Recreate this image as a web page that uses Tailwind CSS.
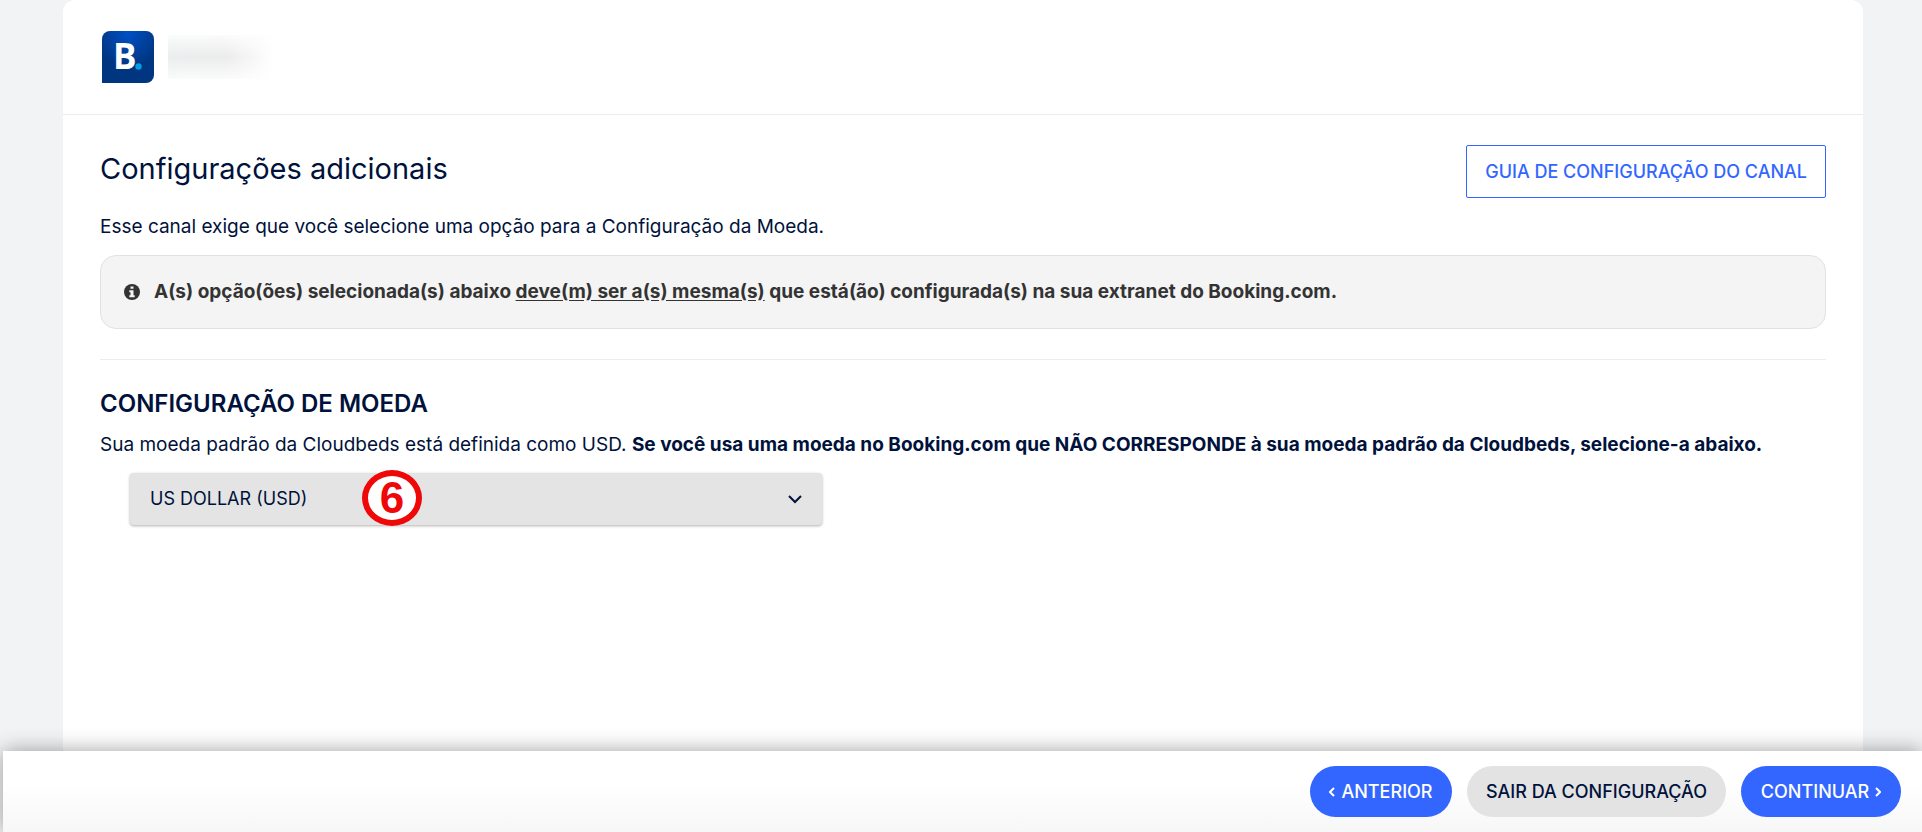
<!DOCTYPE html>
<html lang="pt-BR">
<head>
<meta charset="utf-8">
<meta name="viewport" content="width=device-width, initial-scale=1">
<title>Configurações adicionais</title>
<script src="https://cdn.jsdelivr.net/npm/@tailwindcss/browser@4"></script>
</head>
<body class="flex min-h-screen flex-col bg-[#f1f3f5] font-['Inter',sans-serif] text-[19px] text-[#00123c]">
  <main class="mr-[59px] ml-[63px] grow rounded-t-xl bg-white">
    <header class="flex items-center gap-3.5 border-b border-[#ececec] pt-[31px] pr-[37px] pb-[31px] pl-[39px]">
      <svg class="size-[52px] shrink-0" viewBox="0 0 52 52" role="img" aria-label="Booking.com">
        <defs>
          <radialGradient id="logo" cx="50%" cy="5%" r="65%">
            <stop offset="0" stop-color="#0050c4"/>
            <stop offset="1" stop-color="#003580"/>
          </radialGradient>
        </defs>
        <path d="M8 0H44a8 8 0 0 1 8 8V44a8 8 0 0 1-8 8H0V8a8 8 0 0 1 8-8Z" fill="url(#logo)"/>
        <text x="11" y="38" font-family="Open Sans, sans-serif" font-size="35" font-weight="700" fill="#fff">B</text>
        <circle cx="36.500" cy="35.500" r="3.200" fill="#009fe3"/>
      </svg>
      <div class="relative h-11 w-[106px] bg-linear-to-r from-[#e9eeed] via-[#ececed] via-55% to-white">
        <div class="absolute inset-0 bg-linear-to-b from-white/80 via-transparent to-white/80"></div>
      </div>
    </header>

    <div class="px-[37px] pt-[30px]">
      <div class="flex items-start justify-between">
        <h1 class="pt-1.5 text-[29px] leading-9">Configurações adicionais</h1>
        <a href="#guia" class="flex h-[53px] items-center rounded-xs border border-[#3366ff] px-[18px] text-lg font-medium text-[#3366ff]">GUIA DE CONFIGURAÇÃO DO CANAL</a>
      </div>
      <p class="mt-[15px] leading-7">Esse canal exige que você selecione uma opção para a Configuração da Moeda.</p>
      <div class="mt-3.5 flex h-[74px] items-center gap-3.5 rounded-2xl border border-[#e2e2e2] bg-[#f4f4f4] px-[23px] text-[#333333]">
        <svg class="size-4 shrink-0" viewBox="0 0 16 16" aria-hidden="true">
          <circle cx="8" cy="8" r="8" fill="#333"/>
          <path d="M6.500 2.500h3v2.300h-3zM5.300 6.200h4.200v5h1.200v2H5.300v-2h1.200v-3H5.300z" fill="#f4f4f4"/>
        </svg>
        <p class="font-bold">A(s) opção(ões) selecionada(s) abaixo <u class="underline-offset-2">deve(m) ser a(s) mesma(s)</u> que está(ão) configurada(s) na sua extranet do Booking.com.</p>
      </div>
      <hr class="mt-[30px] border-[#ececec]">
      <h2 class="mt-7 text-2xl leading-8 font-semibold">CONFIGURAÇÃO DE MOEDA</h2>
      <p class="mt-[11px] leading-7">Sua moeda padrão da Cloudbeds está definida como USD. <strong class="font-bold">Se você usa uma moeda no Booking.com que NÃO CORRESPONDE à sua moeda padrão da Cloudbeds, selecione-a abaixo.</strong></p>
      <div class="relative mt-3.5 ml-[30px] w-[692px] max-w-full">
        <select aria-label="Moeda" class="h-[52px] w-full appearance-none rounded-sm bg-[#e4e4e4] px-5 text-lg shadow-[0_1px_3px_#00000050]">
          <option>US DOLLAR (USD)</option>
        </select>
        <svg class="pointer-events-none absolute top-5 right-5 size-3.5" viewBox="0 0 14 14" fill="none" stroke="#00123c" stroke-width="2" aria-hidden="true"><path d="m1 3 6 6 6-6"/></svg>
        <span class="absolute -top-[3px] left-[232px] flex h-14 w-[60px] items-center justify-center rounded-[50%] border-6 border-[#ee0808] bg-white font-['Liberation_Sans',sans-serif] text-[44px] leading-none font-bold text-[#ee0808]">6</span>
      </div>
    </div>
  </main>

  <footer class="relative ml-[3px] flex h-[81px] items-center justify-end gap-[15px] bg-linear-to-b from-white from-40% to-[#f7f7f7] pr-[21px] text-lg shadow-[0_0_20px_#00000060]">
    <button type="button" class="flex h-[51px] w-[142px] items-center justify-center gap-1.5 rounded-full bg-[#3366ff] font-medium text-white">
      <svg class="h-2.5 w-1.5" viewBox="0 0 6 10" fill="none" stroke="currentColor" stroke-width="2" aria-hidden="true"><path d="M5 1 1 5l4 4"/></svg>ANTERIOR
    </button>
    <button type="button" class="h-[51px] w-[259px] rounded-full bg-[#e3e3e3] font-medium">SAIR DA CONFIGURAÇÃO</button>
    <button type="button" class="flex h-[51px] w-[160px] items-center justify-center gap-1.5 rounded-full bg-[#3366ff] font-medium text-white">
      CONTINUAR<svg class="h-2.5 w-1.5" viewBox="0 0 6 10" fill="none" stroke="currentColor" stroke-width="2" aria-hidden="true"><path d="m1 1 4 4-4 4"/></svg>
    </button>
  </footer>
</body>
</html>
